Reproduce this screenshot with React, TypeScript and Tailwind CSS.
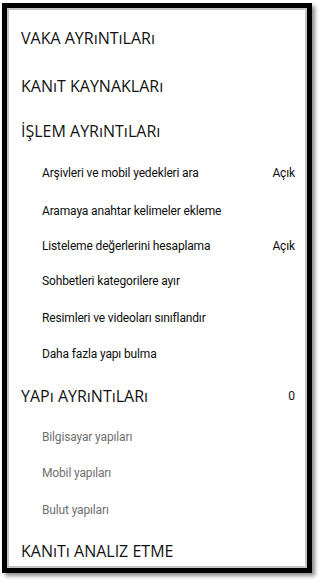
import React from "react";

const Header = ({ text, h, right }: { text: string; h: string; right?: string }) => (
  <div className={`flex items-center justify-between pl-[12px] pr-[10px] text-[16px] text-[#111] ${h}`}>
    <span>{text}</span>
    {right && <span className="text-[12px] font-['Roboto',sans-serif]">{right}</span>}
  </div>
);

const Item = ({ text, h, right, gray }: { text: string; h: string; right?: string; gray?: boolean }) => (
  <div
    className={`flex items-center justify-between pl-[33px] pr-[10px] text-[12px] tracking-[-0.15px] font-['Roboto',sans-serif] ${gray ? "text-[#6f6f6f]" : "text-[#0d0d0d]"} ${h}`}
  >
    <span>{text}</span>
    {right && <span>{right}</span>}
  </div>
);

export default function App() {
  return (
    <div className="w-[321px] h-[585px] bg-white overflow-hidden" style={{ fontFamily: '"Open Sans", "Noto Sans", sans-serif' }}>
      <div className="ml-[2px] mt-[3px] w-[310px] h-[570px] border-[5px] border-black shadow-[3px_3px_4px_rgba(0,0,0,0.45)] bg-white">
        <div className="h-full border-2 border-[#c4c4c4] pt-[4px] overflow-hidden">
          <Header text="VAKA AYRıNTıLARı" h="h-[48px]" />
          <Header text="KANıT KAYNAKLARı" h="h-[47px]" />
          <Header text="İŞLEM AYRıNTıLARı" h="h-[44px]" />
          <Item text="Arşivleri ve mobil yedekleri ara" right="Açık" h="h-[40px]" />
          <Item text="Aramaya anahtar kelimeler ekleme" h="h-[35px]" />
          <Item text="Listeleme değerlerini hesaplama" right="Açık" h="h-[35px]" />
          <Item text="Sohbetleri kategorilere ayır" h="h-[36px]" />
          <Item text="Resimleri ve videoları sınıflandır" h="h-[37px]" />
          <Item text="Daha fazla yapı bulma" h="h-[36px]" />
          <Header text="YAPı AYRıNTıLARı" right="0" h="h-[48px]" />
          <Item text="Bilgisayar yapıları" gray h="h-[34px]" />
          <Item text="Mobil yapıları" gray h="h-[38px]" />
          <Item text="Bulut yapıları" gray h="h-[36px]" />
          <Header text="KANıTı ANALIZ ETME" h="h-[46px]" />
        </div>
      </div>
    </div>
  );
}
